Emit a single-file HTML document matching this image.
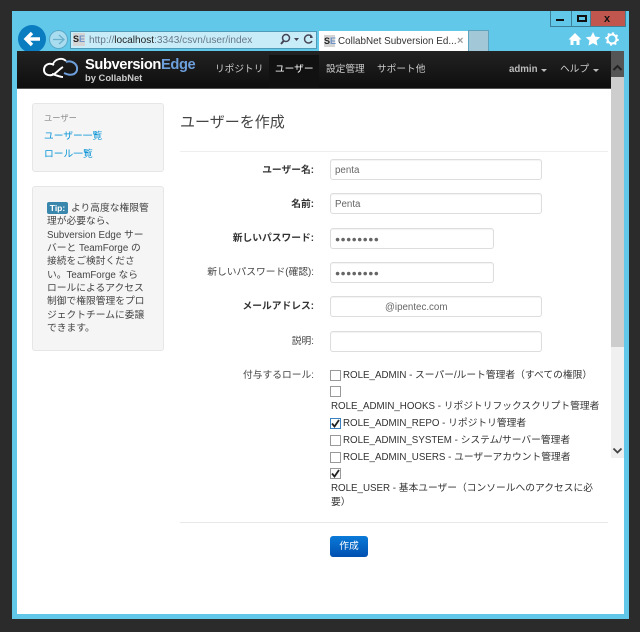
<!DOCTYPE html>
<html><head><meta charset="utf-8"><style>
html,body{margin:0;padding:0}
body{width:640px;height:632px;overflow:hidden;background:#2b2b2b;position:relative;font-family:"Liberation Sans","Noto Sans CJK JP",sans-serif;font-size:9.75px;color:#444}
div,span,a{position:absolute;white-space:nowrap}
#r{left:0;top:0;width:640px;height:632px;filter:blur(.3px)}
.l{right:326px;text-align:right;font-size:9.75px;color:#444;line-height:14px;margin-top:1px}
.b{font-weight:bold;color:#333}
.i{left:330px;height:19px;background:#fff;border:1px solid #ddd;border-radius:3px;box-shadow:inset 0 1px 1px rgba(0,0,0,.05);color:#666;font-size:9.75px;line-height:21px;text-indent:4px}
.w1{width:210px}.w2{width:162px}
.c{width:9px;height:9px;border:1px solid #999;background:#fff;left:330px}
.t{font-size:9.75px;color:#333;line-height:14px;margin-top:1px}
.n{color:#ccc;font-size:9.7px;top:63px;line-height:14px}
.p{background:#f5f5f5;border:1px solid #e6e6e6;border-radius:3px;left:32px;width:130px}
</style></head><body><div id="r">
<div style="left:12px;top:11px;width:617px;height:608px;background:#62c8ea"></div>
<div style="left:17px;top:51px;width:607px;height:563px;background:#fff"></div>

<!-- window controls -->
<div style="left:550px;top:11px;width:20px;height:15px;background:#62c8ea;border:1px solid #3d7f96;border-top:0"></div>
<div style="left:556px;top:19px;width:8px;height:2px;background:#111"></div>
<div style="left:571px;top:11px;width:18px;height:15px;background:#62c8ea;border:1px solid #3d7f96;border-top:0"></div>
<div style="left:577px;top:15px;width:6px;height:3px;border:2px solid #111"></div>
<div style="left:590px;top:11px;width:34px;height:15px;background:#c0564e;border:1px solid #3d7f96;border-top:0"></div>
<div style="left:604px;top:11px;font:bold 11px/16px 'Liberation Sans';color:#111">x</div>

<!-- nav buttons -->
<div style="left:18px;top:25px;width:28px;height:28px;border-radius:50%;background:#0a7cc0"></div>
<svg style="position:absolute;left:18px;top:25px" width="28" height="28"><path d="M22 14H8M14 8l-6 6 6 6" stroke="#fff" stroke-width="3.400" fill="none"/></svg>
<div style="left:49px;top:30px;width:17px;height:17px;border-radius:50%;background:#a8dcee;border:1px solid #5aa8c8"></div>
<svg style="position:absolute;left:49px;top:30px" width="19" height="19"><path d="M4 9.500H15M10 5l5 4.500-5 4.500" stroke="#6cb0cc" stroke-width="1.300" fill="none"/></svg>

<!-- address bar -->
<div style="left:70px;top:31px;width:245px;height:16px;background:#c9edf8;border:1px solid #4d9bb8"></div>
<div style="left:73px;top:33px;width:12px;height:13px;background:#d5d5d5;font:bold 9px/13px 'Liberation Sans';color:#222">S<span style="position:static;color:#6d93c8">E</span></div>
<div style="left:89px;top:33px;font-size:10.100px;line-height:15px;color:#678">http://<span style="position:static;color:#222">localhost</span>:3343/csvn/user/index</div>
<svg style="position:absolute;left:278px;top:31px" width="38" height="17"><circle cx="8" cy="7" r="3.500" stroke="#445" stroke-width="1.500" fill="none"/><path d="M5.500 10L3 13" stroke="#445" stroke-width="2"/><path d="M16 7h5l-2.500 3z" fill="#445"/><path d="M34 6a4 4 0 1 0 0 4" stroke="#445" stroke-width="1.400" fill="none"/><path d="M32 3v4h3z" fill="#445"/></svg>

<!-- tab -->
<div style="left:319px;top:31px;width:149px;height:20px;background:#fff"></div>
<div style="left:468px;top:30px;width:21px;height:21px;background:#a2c7d6;border:1px solid #5ea3bd;border-bottom:0;box-sizing:border-box"></div>
<div style="left:324px;top:35px;width:11px;height:12px;background:#d5d5d5;font:bold 9px/12px 'Liberation Sans';color:#222">S<span style="position:static;color:#6d93c8">E</span></div>
<div style="left:338px;top:35px;font-size:9.900px;line-height:14px;color:#333">CollabNet Subversion Ed...</div>
<div style="left:457px;top:34px;font-size:11px;line-height:14px;color:#999;font-weight:bold">×</div>

<!-- toolbar icons -->
<svg style="position:absolute;left:567px;top:31px" width="54" height="16"><path d="M8 2L1.500 8.500H3.500V14H6.500V10H9.500V14H12.500V8.500H14.500z" fill="#fff"/><path d="M26 1l2.200 4.600 5 .6-3.700 3.400 1 5-4.500-2.500-4.500 2.500 1-5-3.700-3.400 5-.6z" fill="#fff"/><circle cx="45" cy="8" r="4.500" fill="none" stroke="#fff" stroke-width="2"/><circle cx="45" cy="8" r="6" fill="none" stroke="#fff" stroke-width="1.600" stroke-dasharray="2 2.700"/></svg>

<!-- header -->
<div style="left:17px;top:51px;width:594px;height:38px;background:linear-gradient(#222,#0e0e0e);border-bottom:1px solid #555;box-sizing:border-box"></div>
<div style="left:269px;top:55px;width:50px;height:33px;background:#111"></div>
<svg style="position:absolute;left:42px;top:56px" width="38" height="24"><path d="M12 9C7 6 2 9 2 14c0 4 4 6 8 5 4-1 7-6 11-8" stroke="#fff" stroke-width="2" fill="none"/><path d="M11 8c2-5 9-7 13-3" stroke="#fff" stroke-width="1.800" fill="none"/><path d="M10 18c4 1 8 3 11 3" stroke="#fff" stroke-width="2" fill="none"/><path d="M24 6c6-2 12 2 11 8-1 5-7 6-13 3" stroke="#6d9fdc" stroke-width="2" fill="none"/></svg>
<div style="left:85px;top:55px;font-size:14.700px;line-height:20px;font-weight:bold;color:#fff;letter-spacing:-.4px">Subversion<span style="position:static;color:#6d9fdc">Edge</span></div>
<div style="left:85px;top:71px;font-size:9.400px;line-height:13px;font-weight:bold;color:#ccc">by CollabNet</div>
<div class="n" style="left:215px">リポジトリ</div>
<div class="n" style="left:275px;color:#fff">ユーザー</div>
<div class="n" style="left:326px">設定管理</div>
<div class="n" style="left:377px">サポート他</div>
<div class="n" style="left:509px;font-weight:bold;color:#bbb">admin</div>
<div style="left:541px;top:69px;width:0;height:0;border:3px solid transparent;border-top-color:#bbb"></div>
<div class="n" style="left:560px">ヘルプ</div>
<div style="left:593px;top:69px;width:0;height:0;border:3px solid transparent;border-top-color:#bbb"></div>

<!-- scrollbar -->
<div style="left:611px;top:51px;width:13px;height:407px;background:#f0f0f0"></div>
<div style="left:611px;top:51px;width:13px;height:26px;background:#555"></div>
<div style="left:611px;top:77px;width:13px;height:270px;background:#cdcdcd"></div>
<svg style="position:absolute;left:611px;top:63px" width="13" height="10"><path d="M2.500 7L6.500 3l4 4" stroke="#222" stroke-width="2" fill="none"/></svg>
<svg style="position:absolute;left:611px;top:446px" width="13" height="10"><path d="M2.500 2.500L6.500 6.500l4-4" stroke="#444" stroke-width="1.800" fill="none"/></svg>

<!-- sidebar -->
<div class="p" style="top:103px;height:67px"></div>
<div style="left:44px;top:112px;font-size:8.250px;line-height:13px;color:#888">ユーザー</div>
<div style="left:44px;top:130px;font-size:9.750px;line-height:14px;color:#0a94d6">ユーザー一覧</div>
<div style="left:44px;top:148px;font-size:9.750px;line-height:14px;color:#0a94d6">ロール一覧</div>
<div class="p" style="top:186px;height:163px"></div>
<div style="left:47px;top:202px;width:21px;height:12px;background:#3a87ad;border-radius:2px;color:#fff;font-size:8.500px;font-weight:bold;line-height:12px;text-align:center">Tip:</div>
<div style="left:47px;top:202px;font-size:9.750px;line-height:13.350px;color:#444"><span style="position:static;margin-left:24px">より高度な権限管</span><br>理が必要なら、<br>Subversion Edge サー<br>バーと TeamForge の<br>接続をご検討くださ<br>い。TeamForge なら<br>ロールによるアクセス<br>制御で権限管理をプロ<br>ジェクトチームに委譲<br>できます。</div>

<!-- main -->
<div style="left:180px;top:113px;font-size:15px;line-height:20px;color:#444">ユーザーを作成</div>
<div style="left:180px;top:151px;width:428px;height:1px;background:#eee"></div>

<div class="l b" style="top:163px">ユーザー名:</div>
<div class="i w1" style="top:159px">penta</div>
<div class="l b" style="top:197px">名前:</div>
<div class="i w1" style="top:193px">Penta</div>
<div class="l b" style="top:231px">新しいパスワード:</div>
<div class="i w2" style="top:228px;letter-spacing:.4px;font-size:8.500px">●●●●●●●●</div>
<div class="l" style="top:265px">新しいパスワード(確認):</div>
<div class="i w2" style="top:262px;letter-spacing:.4px;font-size:8.500px">●●●●●●●●</div>
<div class="l b" style="top:299px">メールアドレス:</div>
<div class="i w1" style="top:296px;text-indent:54px">@ipentec.com</div>
<div class="l" style="top:334px">説明:</div>
<div class="i w1" style="top:331px"></div>
<div class="l" style="top:368px">付与するロール:</div>

<div class="c" style="top:370px"></div>
<div class="t" style="left:343px;top:368px">ROLE_ADMIN - スーパー/ルート管理者（すべての権限）</div>
<div class="c" style="top:386px"></div>
<div class="t" style="left:331px;top:399px">ROLE_ADMIN_HOOKS - リポジトリフックスクリプト管理者</div>
<div class="c" style="top:418px;border-color:#3a7fc0"></div>
<div class="t" style="left:343px;top:416px">ROLE_ADMIN_REPO - リポジトリ管理者</div>
<div class="c" style="top:435px"></div>
<div class="t" style="left:343px;top:433px">ROLE_ADMIN_SYSTEM - システム/サーバー管理者</div>
<div class="c" style="top:452px"></div>
<div class="t" style="left:343px;top:450px">ROLE_ADMIN_USERS - ユーザーアカウント管理者</div>
<div class="c" style="top:468px"></div>
<svg style="position:absolute;left:330px;top:418px" width="11" height="11"><path d="M2 5.500L4.500 8.500 9 2" stroke="#222" stroke-width="1.800" fill="none"/></svg>
<svg style="position:absolute;left:330px;top:468px" width="11" height="11"><path d="M2 5.500L4.500 8.500 9 2" stroke="#222" stroke-width="1.800" fill="none"/></svg>
<div class="t" style="left:331px;top:481px">ROLE_USER - 基本ユーザー（コンソールへのアクセスに必</div>
<div class="t" style="left:331px;top:495px">要）</div>

<div style="left:180px;top:522px;width:428px;height:1px;background:#e8e8e8"></div>
<div style="left:330px;top:536px;width:38px;height:21px;border-radius:3px;background:linear-gradient(#0a7ad8,#0050b0);color:#fff;font-size:9.750px;line-height:21px;text-align:center">作成</div>
</div></body></html>
